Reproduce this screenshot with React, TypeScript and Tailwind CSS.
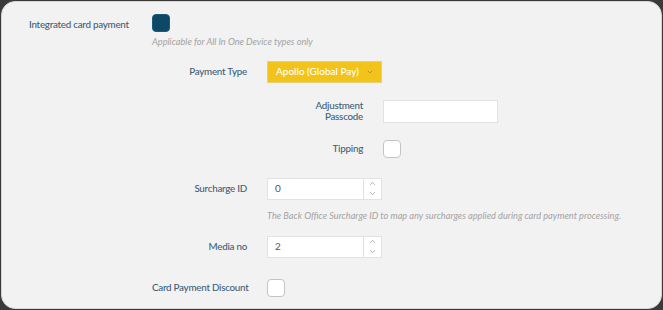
import { ChevronDown, ChevronUp } from 'lucide-react';

const font = { fontFamily: 'Lato, "Open Sans", sans-serif' };

function Label({ children, className = '' }: { children: React.ReactNode; className?: string }) {
  return (
    <div className={`text-[9.8px] font-medium leading-[11px] tracking-[-0.25px] text-[#3f5f78] ${className}`}>{children}</div>
  );
}

function Box({ checked = false }: { checked?: boolean }) {
  return checked ? (
    <div className="w-[18px] h-[18px] rounded-[4px] bg-[#0d4867] border border-[#1a5a7a]" />
  ) : (
    <div className="w-[18px] h-[18px] rounded-[4px] bg-white border border-[#c4c4c4]" />
  );
}

function NumberInput({ value }: { value: string }) {
  return (
    <div className="flex w-[115px] h-[22px] bg-white border border-[#e2e2e2]">
      <div className="flex-1 flex items-center pl-[7px] text-[10px] text-[#555]">{value}</div>
      <div className="w-[18px] border-l border-[#e2e2e2] flex flex-col items-center justify-center gap-[1px] text-[#777]">
        <ChevronUp size={9} strokeWidth={1.5} />
        <ChevronDown size={9} strokeWidth={1.5} />
      </div>
    </div>
  );
}

export default function App() {
  return (
    <div className="w-[663px] h-[310px] bg-[#3a3a3a] p-px" style={font}>
      <div className="h-[308px] bg-[#f2f2f2] border border-[#d6d6d6] rounded-[14px] pl-[27px] pt-[12px]">
        {/* Integrated card payment */}
        <div className="flex">
          <Label className="w-[123px] pt-[5px]">Integrated card payment</Label>
          <div>
            <Box checked />
            <p className="mt-[3px] text-[9.2px] italic text-[#a3a3a3]">Applicable for All In One Device types only</p>
          </div>
        </div>

        <div className="ml-[123px] mt-[12px] flex flex-col">
          {/* Payment Type */}
          <div className="flex items-center">
            <Label className="w-[95px] text-right">Payment Type</Label>
            <div className="ml-[20px] w-[115px] h-[22px] bg-[#f2c31b] border border-[#e8d07a] flex items-center justify-between pl-[8px] pr-[7px]">
              <span className="text-[10px] font-medium text-white">Apollo (Global Pay)</span>
              <ChevronDown size={8} strokeWidth={2} className="text-[#8a7a5a]" />
            </div>
          </div>

          <div className="ml-[115px] mt-[17px] flex flex-col">
            <div className="flex items-center">
              <Label className="w-[96px] text-right">Adjustment<br />Passcode</Label>
              <div className="ml-[20px] w-[115px] h-[23px] bg-white border border-[#e2e2e2]" />
            </div>
            <div className="flex items-center mt-[17px]">
              <Label className="w-[96px] text-right">Tipping</Label>
              <div className="ml-[20px]"><Box /></div>
            </div>
          </div>

          {/* Surcharge ID */}
          <div className="flex items-center mt-[20px]">
            <Label className="w-[95px] text-right">Surcharge ID</Label>
            <div className="ml-[20px]"><NumberInput value="0" /></div>
          </div>
          <p className="ml-[115px] mt-[9px] text-[9.2px] italic text-[#a3a3a3]">
            The Back Office Surcharge ID to map any surcharges applied during card payment processing.
          </p>

          {/* Media no */}
          <div className="flex items-center mt-[13px]">
            <Label className="w-[95px] text-right">Media no</Label>
            <div className="ml-[20px]"><NumberInput value="2" /></div>
          </div>

          {/* Card Payment Discount */}
          <div className="flex items-center mt-[21px]">
            <Label className="w-[95px] text-right whitespace-nowrap">Card Payment Discount</Label>
            <div className="ml-[20px]"><Box /></div>
          </div>
        </div>
      </div>
    </div>
  );
}
